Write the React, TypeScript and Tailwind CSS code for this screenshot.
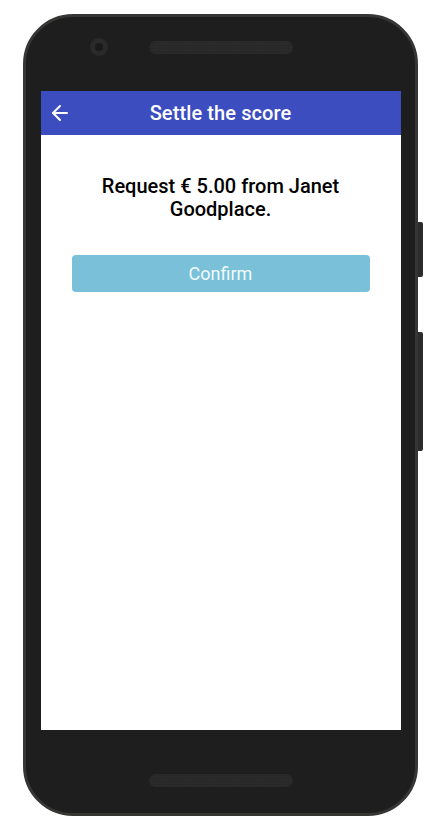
import { ArrowLeft } from "lucide-react";

function Speaker() {
  return (
    <div className="h-[13px] w-[144px] rounded-full bg-[#2a2a2a] bg-[radial-gradient(#232323_0.8px,transparent_0.9px)] bg-[length:3px_3px]" />
  );
}

export default function App() {
  return (
    <div className="relative h-[836px] w-[445px] bg-white pl-[23px] pt-[14px] font-['Roboto',sans-serif]">
      <div className="relative flex h-[802px] w-[395px] flex-col items-center rounded-[50px] border-[3px] border-[#363634] bg-[#1e1e1e]">
        <div className="flex h-[74px] w-full items-start pl-[64px] pt-[24px]">
          <div className="mt-[-3px] flex h-[18px] w-[18px] items-center justify-center rounded-full bg-[#2a2a2a]">
            <div className="h-[8px] w-[8px] rounded-full bg-[#1a1a1c]" />
          </div>
          <div className="ml-[41px]">
            <Speaker />
          </div>
        </div>

        <div className="flex h-[639px] w-[360px] flex-col bg-white">
          <header className="relative flex h-[44px] items-center justify-center bg-[#3b4dbf] text-white">
            <ArrowLeft className="absolute left-[7px] h-[24px] w-[24px]" strokeWidth={2} />
            <h1 className="text-[20px] font-medium tracking-[0.1px]">Settle the score</h1>
          </header>
          <main className="flex flex-col items-center px-[31px] pt-[40px]">
            <p className="text-center text-[20px] font-medium leading-[23px] text-black">
              Request € 5.00 from Janet Goodplace.
            </p>
            <button className="mt-[34px] h-[37px] w-full rounded-[4px] bg-[#79c0d8] text-[18px] text-[#f2fafc]">
              Confirm
            </button>
          </main>
        </div>

        <div className="flex w-full flex-1 justify-center pt-[44px]">
          <Speaker />
        </div>

        <div className="absolute left-[392px] top-[205px] h-[55px] w-[5px] rounded-r-[2px] bg-[#2c2c2e]" />
        <div className="absolute left-[392px] top-[315px] h-[119px] w-[5px] rounded-r-[2px] bg-[#2c2c2e]" />
      </div>
    </div>
  );
}
